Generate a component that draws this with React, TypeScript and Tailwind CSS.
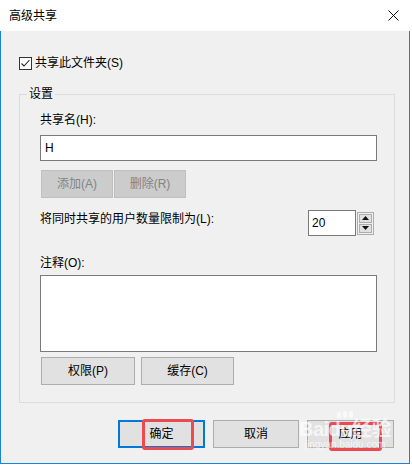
const font = "font-['Liberation_Sans','Noto_Sans_CJK_SC',sans-serif]";

function Btn({ label, className = '' }: { label: string; className?: string }) {
  return (
    <button
      className={`h-[28px] flex items-center justify-center bg-[#e1e1e1] border border-[#adadad] text-[12px] leading-4 text-black ${className}`}
    >
      {label}
    </button>
  );
}

function DisabledBtn({ label }: { label: string }) {
  return (
    <button className="h-[28px] w-[72px] flex items-center justify-center bg-[#cccccc] border border-[#bfbfbf] text-[12px] leading-4 text-[#838383]">
      {label}
    </button>
  );
}

export default function App() {
  return (
    <div className={`w-[412px] h-[466px] bg-white ${font} text-[12px] leading-4 text-black`}>
      <div className="w-[410px] flex flex-col">
        {/* title bar */}
        <div className="h-[31px] bg-white flex items-center justify-between pl-[9px] pr-[10px]">
          <span className="text-[12px]">高级共享</span>
          <svg width="11" height="11" viewBox="0 0 11 11" className="mr-[1px]">
            <path d="M0.5 0.5 L10.5 10.5 M10.5 0.5 L0.5 10.5" stroke="#111" strokeWidth="1" />
          </svg>
        </div>

        {/* body */}
        <div className="h-[433px] bg-[#f0f0f0] border-l border-r border-b border-[#1883d7] flex flex-col pt-[24px]">
          <label className="flex items-center h-4 ml-[18px] gap-[3px]">
            <span className="w-[13px] h-[13px] border border-[#333333] bg-white flex items-center justify-center">
              <svg width="11" height="11" viewBox="0 0 11 11">
                <path d="M1.5 5.5 L4 8 L9.5 2" fill="none" stroke="#222" strokeWidth="1.1" />
              </svg>
            </span>
            <span>共享此文件夹(S)</span>
          </label>

          <fieldset className="mt-[15px] ml-[18px] w-[376px] border border-[#dcdcdc] pl-[20px] pr-[17px] pt-[10px] pb-[17px]">
            <legend className="-ml-[13px] px-[2px] leading-4">设置</legend>

            <div className="leading-4">共享名(H):</div>
            <div className="mt-[7px] h-[26px] w-[337px] bg-white border border-[#7a7a7a] flex items-center pl-[4px]">
              H
            </div>

            <div className="mt-[9px] ml-[1px] flex gap-[1px]">
              <DisabledBtn label="添加(A)" />
              <DisabledBtn label="删除(R)" />
            </div>

            <div className="mt-[12px] flex items-start">
              <span className="mt-[1px]">将同时共享的用户数量限制为(L):</span>
              <div className="ml-auto mr-[3px] flex items-center">
                <div className="h-[26px] w-[48px] bg-white border border-[#7a7a7a] flex items-center pl-[3px]">
                  20
                </div>
                <div className="h-[23px] w-[17px] border border-[#adadad] bg-[#f0f0f0] flex flex-col p-[1px] gap-[1px] ml-[1px]">
                  <div className="flex-1 bg-[#e1e1e1] border border-[#adadad] flex items-center justify-center">
                    <svg width="7" height="4" viewBox="0 0 7 4"><path d="M3.5 0 L7 4 L0 4 Z" fill="#111" /></svg>
                  </div>
                  <div className="flex-1 bg-[#e1e1e1] border border-[#adadad] flex items-center justify-center">
                    <svg width="7" height="4" viewBox="0 0 7 4"><path d="M0 0 L7 0 L3.5 4 Z" fill="#111" /></svg>
                  </div>
                </div>
              </div>
            </div>

            <div className="mt-[19px] leading-4">注释(O):</div>
            <div className="mt-[4px] h-[77px] w-[337px] bg-white border border-[#7a7a7a]" />

            <div className="mt-[5px] ml-[1px] flex gap-[6px]">
              <Btn label="权限(P)" className="w-[94px]" />
              <Btn label="缓存(C)" className="w-[93px]" />
            </div>
          </fieldset>

          <div className="mt-[17px] ml-[117px] flex gap-[8px]">
            <div className="relative">
              <button className="h-[28px] w-[87px] flex items-center justify-center bg-[#e1e1e1] border-2 border-[#0078d7] text-[12px]">
                确定
              </button>
              <div className="absolute left-[24px] top-[-1px] w-[52px] h-[31px] border-[3px] border-[#ea4a50] rounded-[3px]" />
            </div>
            <Btn label="取消" className="w-[86px]" />
            <div className="relative">
              <Btn label="应用" className="w-[87px]" />
              <div className="absolute left-[22px] top-[2px] w-[53px] h-[29px] border-[3px] border-[#ea4a50] rounded-[3px]" />
              <div className="absolute left-[-12px] top-[-12px] w-[100px] flex flex-col items-center text-white/70 pointer-events-none">
                <div className="flex gap-[2px] h-[10px] items-end">
                  <span className="w-[4px] h-[6px] rounded-full bg-white/60" />
                  <span className="w-[4px] h-[7px] rounded-full bg-white/60" />
                  <span className="w-[4px] h-[7px] rounded-full bg-white/60" />
                </div>
                <div className="text-[20px] leading-[22px] font-bold tracking-tight">Baidu经验</div>
                <div className="text-[10px] leading-[10px]">jingyan.baidu.com</div>
              </div>
            </div>
          </div>
        </div>
      </div>
    </div>
  );
}
